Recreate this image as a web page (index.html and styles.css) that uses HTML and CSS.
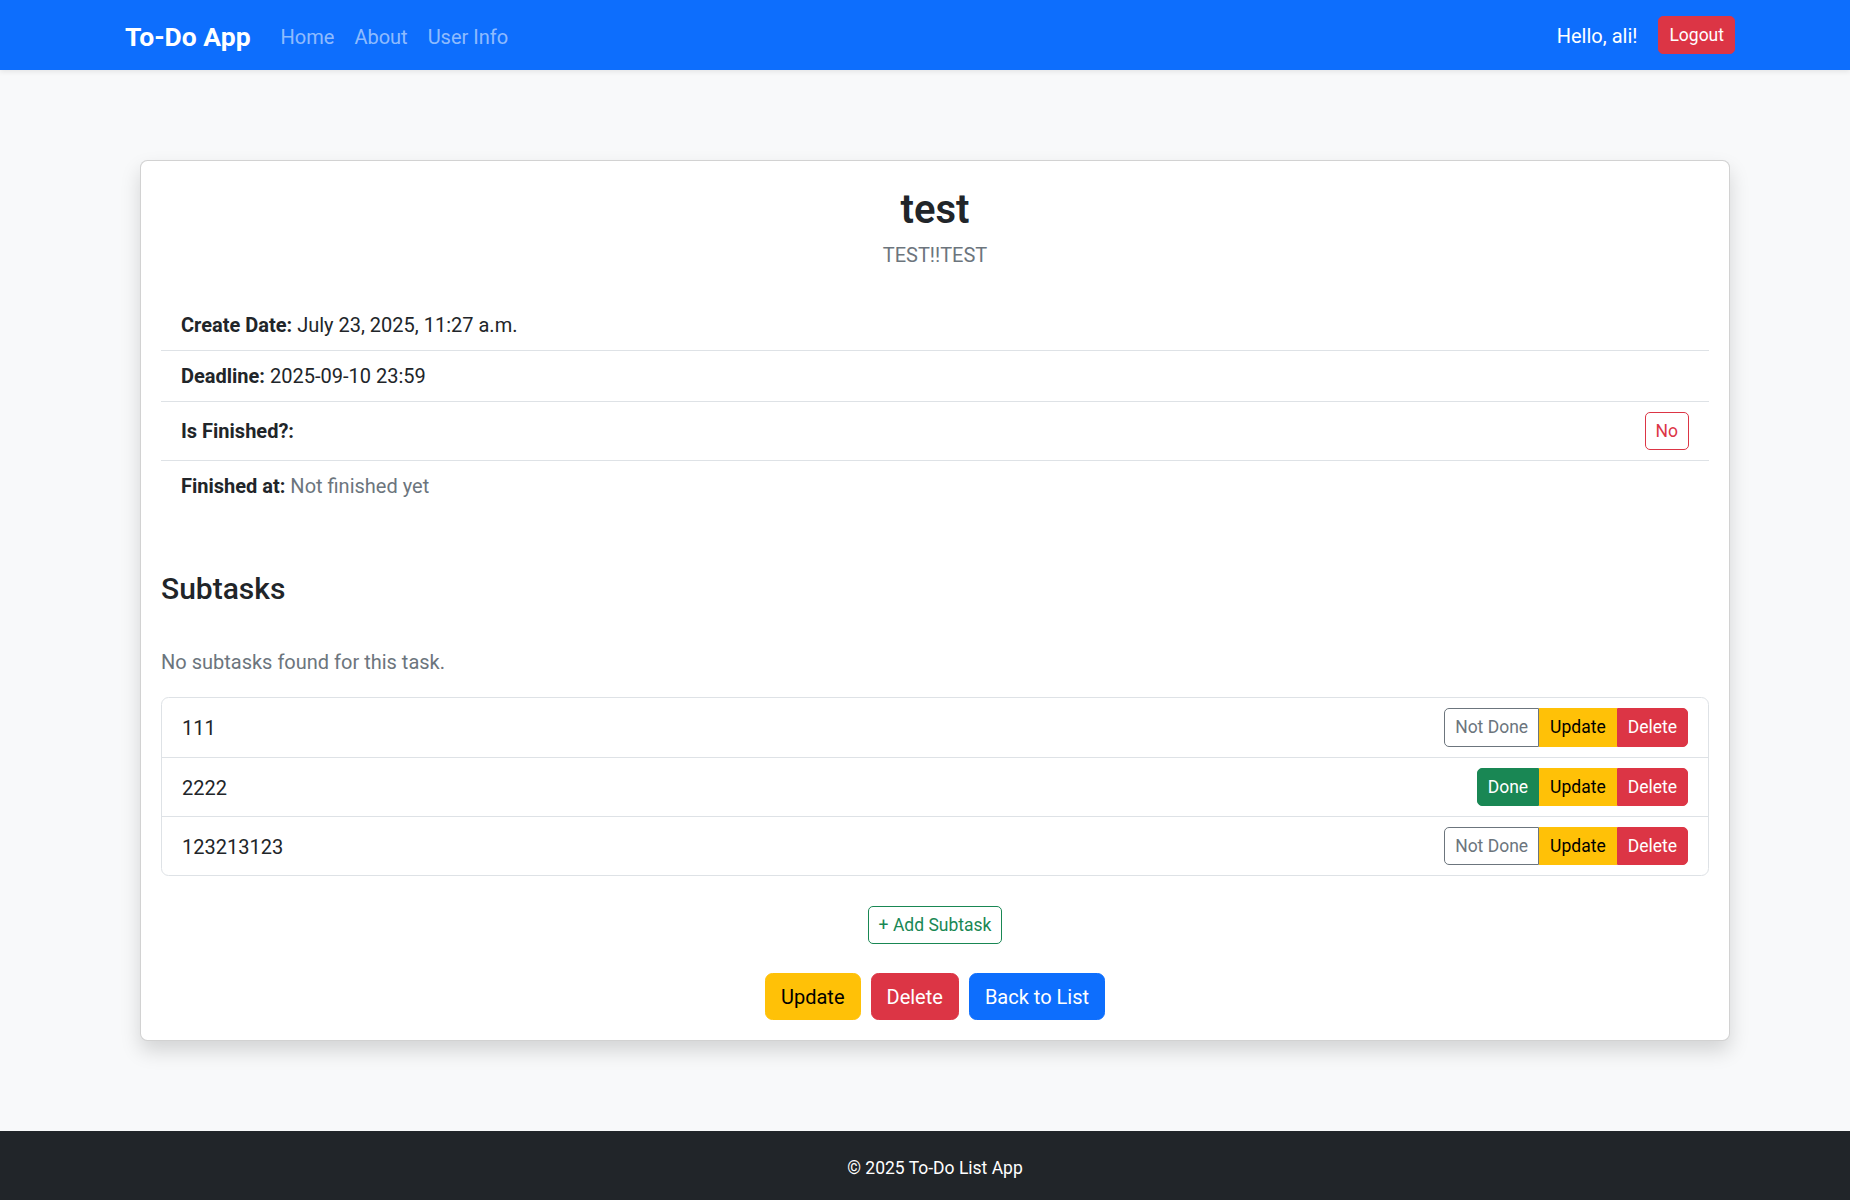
FILE: index.html
```html
<!DOCTYPE html>
<html lang="en">
<head>
<meta charset="utf-8">
<title>To-Do App</title>
<link rel="stylesheet" href="styles.css">
</head>
<body>
<nav class="navbar">
  <a class="brand" href="#">To-Do App</a>
  <ul class="nav-links">
    <li><a href="#">Home</a></li>
    <li><a href="#">About</a></li>
    <li><a href="#">User Info</a></li>
  </ul>
  <div class="nav-right">
    <span class="hello">Hello, ali!</span>
    <a class="btn btn-sm btn-danger" href="#">Logout</a>
  </div>
</nav>

<main class="main">
  <div class="card">
    <div class="card-body">
      <h2 class="title">test</h2>
      <p class="subtitle">TEST!!TEST</p>

      <ul class="details">
        <li><span><strong>Create Date:</strong> July 23, 2025, 11:27 a.m.</span></li>
        <li><span><strong>Deadline:</strong> 2025-09-10 23:59</span></li>
        <li><strong>Is Finished?:</strong><a class="btn btn-sm btn-outline-danger" href="#">No</a></li>
        <li><span><strong>Finished at:</strong> <span class="muted">Not finished yet</span></span></li>
      </ul>

      <h4 class="subtasks-title">Subtasks</h4>
      <p class="empty muted">No subtasks found for this task.</p>

      <ul class="subtasks">
        <li>
          <span>111</span>
          <div class="btn-group">
            <a class="btn btn-sm btn-outline-secondary" href="#">Not Done</a>
            <a class="btn btn-sm btn-warning" href="#">Update</a>
            <a class="btn btn-sm btn-danger" href="#">Delete</a>
          </div>
        </li>
        <li>
          <span>2222</span>
          <div class="btn-group">
            <a class="btn btn-sm btn-success" href="#">Done</a>
            <a class="btn btn-sm btn-warning" href="#">Update</a>
            <a class="btn btn-sm btn-danger" href="#">Delete</a>
          </div>
        </li>
        <li>
          <span>123213123</span>
          <div class="btn-group">
            <a class="btn btn-sm btn-outline-secondary" href="#">Not Done</a>
            <a class="btn btn-sm btn-warning" href="#">Update</a>
            <a class="btn btn-sm btn-danger" href="#">Delete</a>
          </div>
        </li>
      </ul>

      <div class="add-wrap">
        <a class="btn btn-sm btn-outline-success" href="#">+ Add Subtask</a>
      </div>

      <div class="actions">
        <a class="btn btn-warning" href="#">Update</a>
        <a class="btn btn-danger" href="#">Delete</a>
        <a class="btn btn-primary" href="#">Back to List</a>
      </div>
    </div>
  </div>
</main>

<footer class="footer">© 2025 To-Do List App</footer>
</body>
</html>
```

FILE: styles.css
```css
* { box-sizing: border-box; }

html, body { margin: 0; padding: 0; }

body {
  font-family: Roboto, "Noto Sans", "Liberation Sans", sans-serif;
  font-size: 20px;
  line-height: 1.5;
  color: #212529;
  background: #f8f9fa;
  min-height: 100vh;
  display: flex;
  flex-direction: column;
}

a { text-decoration: none; }

/* Navbar */
.navbar {
  height: 70px;
  background: #0d6efd;
  display: flex;
  align-items: center;
  padding: 0 115px 0 125px;
  box-shadow: 0 2px 5px rgba(0, 0, 0, 0.08);
  position: relative;
  z-index: 1;
}

.brand {
  color: #fff;
  font-size: 26.5px;
  font-weight: 700;
  margin-right: 20px;
  line-height: 37px;
  padding-top: 2px;
}

.nav-links {
  list-style: none;
  margin: 0;
  padding: 0;
  display: flex;
}

.nav-links a {
  display: block;
  padding: 12px 10px 8px;
  color: rgba(255, 255, 255, 0.55);
}

.nav-right {
  margin-left: auto;
  display: flex;
  align-items: center;
}

.hello {
  color: #fff;
  margin-right: 21px;
  padding-top: 2px;
}

/* Buttons */
.btn {
  display: inline-block;
  font-size: 20px;
  line-height: 30px;
  padding: 7.5px 15px;
  border: 1px solid transparent;
  border-radius: 7.5px;
  color: #fff;
  text-align: center;
  white-space: nowrap;
}

.btn-sm {
  font-size: 17.5px;
  line-height: 26.25px;
  padding: 5px 10px;
  border-radius: 5px;
}

.btn-danger { background: #dc3545; border-color: #dc3545; color: #fff; }
.btn-warning { background: #ffc107; border-color: #ffc107; color: #000; }
.btn-success { background: #198754; border-color: #198754; color: #fff; }
.btn-primary { background: #0d6efd; border-color: #0d6efd; color: #fff; }
.btn-outline-danger { background: transparent; border-color: #dc3545; color: #dc3545; }
.btn-outline-secondary { background: #fff; border-color: #6c757d; color: #6c757d; }
.btn-outline-success { background: transparent; border-color: #198754; color: #198754; }

.btn-group { display: inline-flex; }
.btn-group .btn { border-radius: 0; }
.btn-group .btn:first-child { border-radius: 5px 0 0 5px; }
.btn-group .btn:last-child { border-radius: 0 5px 5px 0; }

/* Main / card */
.main {
  flex: 1 0 auto;
}

.card {
  margin: 90px 120px 90px 140px;
  background: #fff;
  border: 1px solid rgba(0, 0, 0, 0.175);
  border-radius: 7.5px;
  box-shadow: 0 10px 20px rgba(0, 0, 0, 0.15);
}

.card-body { padding: 20px; }

.title {
  margin: 4.5px 0 6.5px;
  font-size: 40px;
  line-height: 48px;
  font-weight: 600;
  text-align: center;
}

.subtitle {
  margin: 0 0 30px;
  text-align: center;
  color: #6c757d;
}

.muted { color: #6c757d; }

.details {
  list-style: none;
  margin: 0;
  padding: 0;
}

.details li {
  display: flex;
  justify-content: space-between;
  align-items: center;
  padding: 10px 20px;
  border-bottom: 1px solid #dee2e6;
}

.details li:last-child { border-bottom: 0; }

.details strong { font-weight: 700; }

.subtasks-title {
  margin: 60px 0 0;
  font-size: 30px;
  line-height: 36px;
  font-weight: 500;
}

.empty {
  margin: 40px 0 20px;
}

.subtasks {
  list-style: none;
  margin: 0;
  padding: 0;
  border: 1px solid #dee2e6;
  border-radius: 7.5px;
}

.subtasks li {
  display: flex;
  justify-content: space-between;
  align-items: center;
  padding: 10px 20px;
  border-bottom: 1px solid #dee2e6;
}

.subtasks li > span {
  padding-top: 2px;
}

.subtasks li:last-child { border-bottom: 0; }

.add-wrap {
  margin-top: 30px;
  text-align: center;
}

.actions {
  margin-top: 29px;
  display: flex;
  justify-content: center;
  gap: 10px;
}

/* Footer */
.footer {
  background: #212529;
  color: #fff;
  text-align: center;
  font-size: 17.5px;
  line-height: 26px;
  padding: 24px 0 20px 20px;
}
```
